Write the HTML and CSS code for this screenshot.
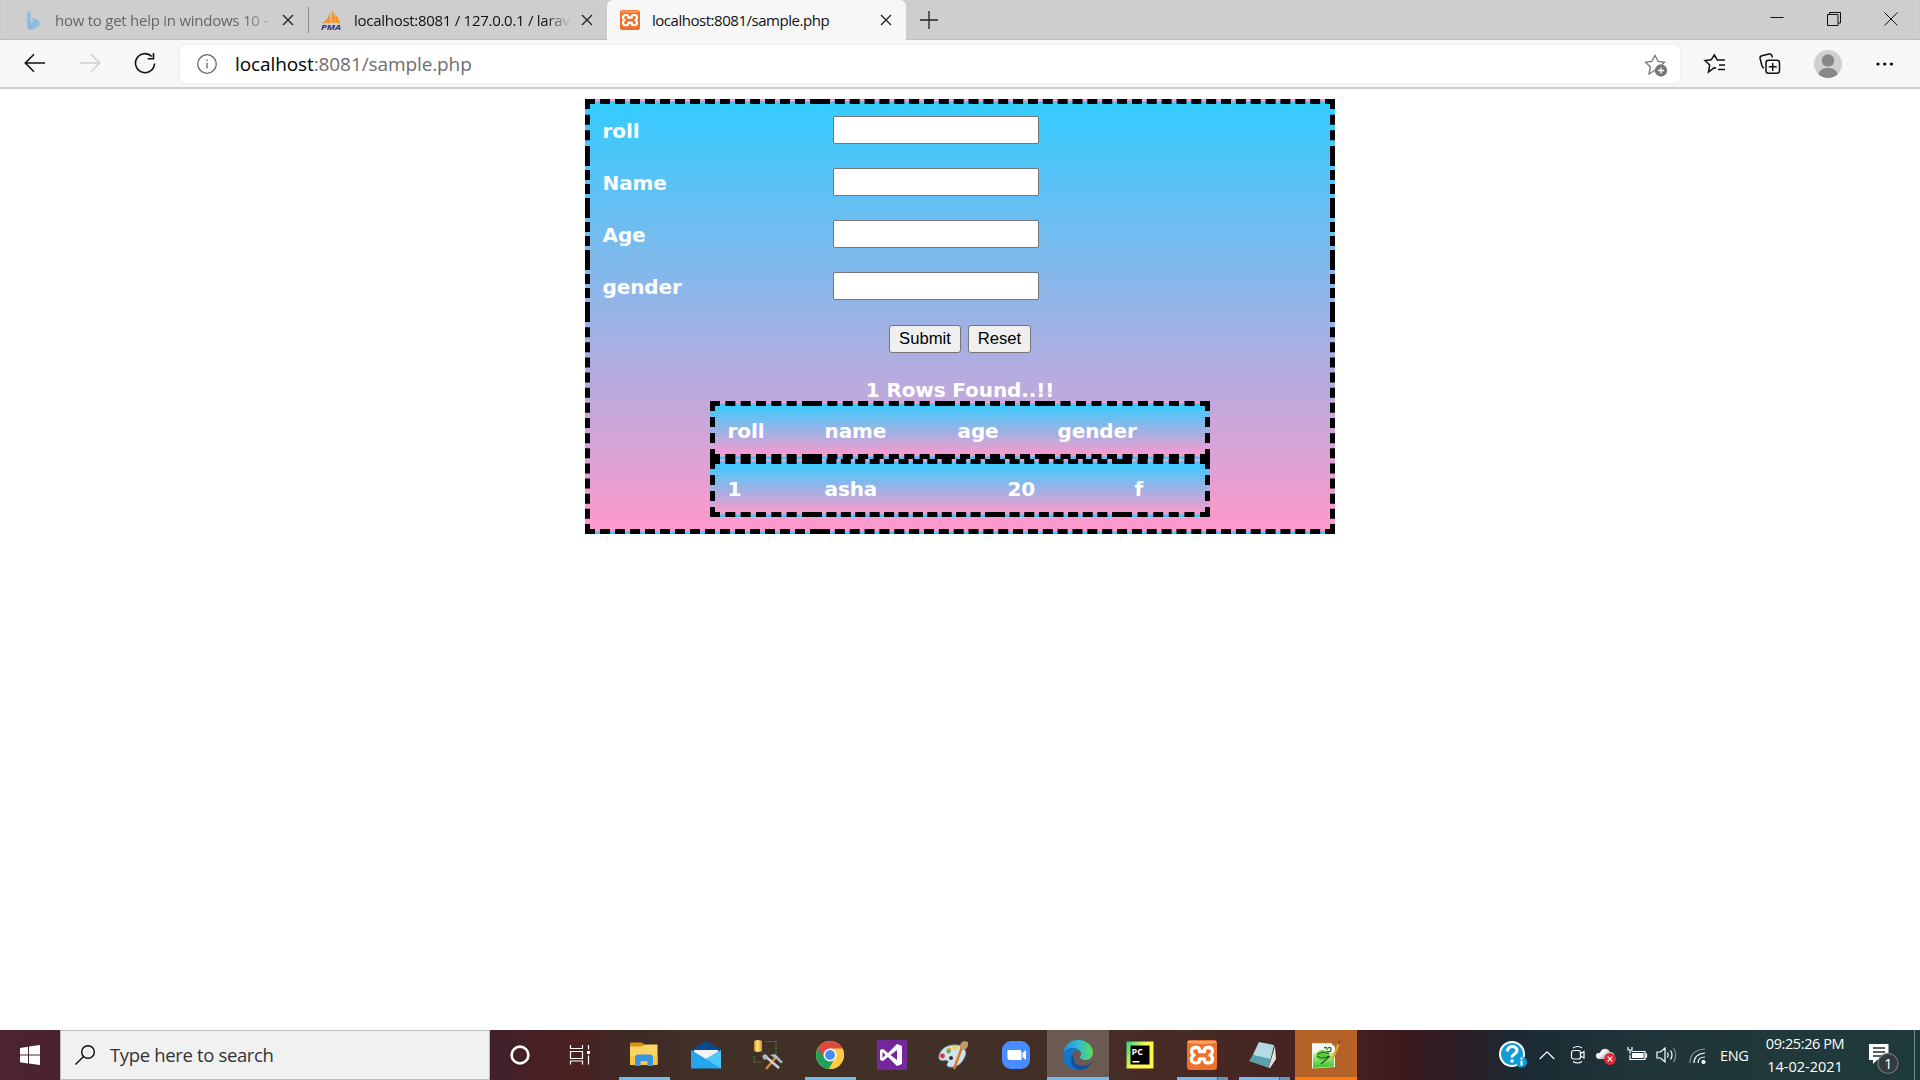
FILE: index.html
```html
<!DOCTYPE html>
<html lang="en">
<head>
<meta charset="utf-8">
<title>localhost:8081/sample.php</title>
<link rel="stylesheet" href="styles.css">
</head>
<body>
<div class="screen">
  <header class="tabs">
    <div class="tab tab-bing">
      <svg class="fav" viewBox="0 0 20 20"><defs><linearGradient id="bg" x1="0" y1="0" x2="1" y2="1"><stop offset="0" stop-color="#8ccbe8"/><stop offset=".5" stop-color="#8bb5e6"/><stop offset="1" stop-color="#84d3d8"/></linearGradient></defs><path d="M4 .7l3.6 1.4v11.2l3-1.8-1.5-3.6 5.2 1.8c2.200 1 3 2.800 2.300 4.800-.4 1.200-1.200 1.900-2.300 2.500l-5 2.600c-1.500.6-2.900.300-3.900-.600-.900-.700-1.400-1.700-1.400-3z" fill="url(#bg)"/></svg>
      <span class="tab-title faded">how to get help in windows 10 -</span>
      <svg class="x" viewBox="0 0 12 12"><path d="M1 1l10 10M11 1L1 11"/></svg>
    </div>
    <div class="tab tab-pma">
      <svg class="fav" viewBox="0 0 20 20"><path d="M9 2C8 7 5 11 1 13.500c3-.8 5-.8 8.500-.500zM10.500 0c3 3.500 4 8 4 13l-4-.500zM14 4c3 3 4.500 6 5 9.500l-4-.7z" fill="#f59421"/><text x="0" y="19.500" class="pma" textLength="20" lengthAdjust="spacingAndGlyphs">PMA</text></svg>
      <span class="tab-title cut">localhost:8081 / 127.0.0.1 / larave</span>
      <svg class="x" viewBox="0 0 12 12"><path d="M1 1l10 10M11 1L1 11"/></svg>
    </div>
    <div class="tab tab-active">
      <svg class="fav" viewBox="1 1 30 30"><use href="#xampp"/></svg>
      <span class="tab-title">localhost:8081/sample.php</span>
      <svg class="x" viewBox="0 0 12 12"><path d="M1 1l10 10M11 1L1 11"/></svg>
    </div>
    <svg class="plus" viewBox="0 0 18 18"><path d="M9 0v18M0 9h18"/></svg>
    <div class="win">
      <svg viewBox="0 0 14 14"><path d="M.5 5.500h13"/></svg>
      <svg viewBox="0 0 14 14"><path d="M.5 2.500h10.500v11H.5zM2.500 2.500V.5h11v10.500H11"/></svg>
      <svg viewBox="0 0 14 14"><path d="M.5.5l13 13M13.500.5l-13 13"/></svg>
    </div>
  </header>

  <nav class="toolbar">
    <svg class="nav-icon back" viewBox="0 0 22 20"><path d="M21 10H1.500M10 1.300L1.300 10l8.700 8.700"/></svg>
    <svg class="nav-icon forward" viewBox="0 0 22 20"><path d="M1 10h19.500M12 1.300l8.700 8.700-8.700 8.700"/></svg>
    <svg class="nav-icon reload" viewBox="0 0 22 22"><path d="M20.500 11.500A9.500 9.500 0 1 1 17.800 4.500M19.500 1v5.700h-5.800"/></svg>
    <div class="address">
      <svg class="info" viewBox="0 0 20 20"><circle cx="10" cy="10" r="9.300"/><path d="M10 8.700v5.800M10 5.500v1.400"/></svg>
      <span class="url"><b>localhost</b>:8081/sample.php</span>
      <svg class="add-fav" viewBox="0 0 24 24"><path d="M14 18l-3-1.700L5 20l1.400-7L1.500 8.300l6.300-.8L11 1.500l3.200 6 6.300.8-2.500 2.200"/><circle cx="17" cy="16.500" r="5.500" class="dot"/><path d="M17 13.500v6M14 16.500h6" class="w"/></svg>
    </div>
    <svg class="tool fav-list" viewBox="0 0 22 20"><path d="M12 14.500l-1.700-.9L4.500 18l1.200-7L1 6.500l6.200-.7L10.300 1l3 5H21M15 11h6M14 15.500h7"/></svg>
    <svg class="tool collections" viewBox="0 0 22 22"><path d="M5 15C3 14.500 3 13 2.600 11.500L1.100 5.500C.8 4 1.500 3.200 2.800 2.800L10 1c1.700-.3 2.500.3 2.900 1.700l.5 1.800"/><rect x="7" y="7.200" width="13.500" height="13" rx="2.500"/><path d="M13.700 10v8M9.700 13.700h8"/></svg>
    <svg class="avatar" viewBox="0 0 28 28"><circle cx="14" cy="14" r="14" fill="#d2d0ce"/><circle cx="14" cy="10.500" r="6.200" fill="#8a8886"/><path d="M4.500 24.200C5.500 20 9 18 14 18s8.500 2 9.500 6.200A14 14 0 0 1 14 28a14 14 0 0 1-9.500-3.800z" fill="#8a8886"/></svg>
    <svg class="more" viewBox="0 0 18 4"><circle cx="2" cy="2" r="1.600"/><circle cx="8.700" cy="2" r="1.600"/><circle cx="15.400" cy="2" r="1.600"/></svg>
  </nav>

  <main class="page">
    <table class="sheet form">
      <colgroup><col class="c-label"><col></colgroup>
      <tr><td class="name">roll</td><td><input type="text" aria-label="roll"></td></tr>
      <tr><td class="name">Name</td><td><input type="text" aria-label="Name"></td></tr>
      <tr><td class="name">Age</td><td><input type="text" aria-label="Age"></td></tr>
      <tr><td class="name">gender</td><td><input type="text" aria-label="gender"></td></tr>
      <tr><td colspan="2">
        <div class="buttons"><button class="submit">Submit</button><button class="reset">Reset</button></div>
        <div class="found">1 Rows Found..!!</div>
        <table class="sheet result">
          <colgroup><col class="w1"><col class="w2"><col class="w3"><col></colgroup>
          <tr><td>roll</td><td>name</td><td>age</td><td>gender</td></tr>
        </table>
        <table class="sheet result">
          <colgroup><col class="w1"><col class="w4"><col class="w5"><col></colgroup>
          <tr><td>1</td><td>asha</td><td>20</td><td>f</td></tr>
        </table>
      </td></tr>
    </table>
  </main>

  <footer class="taskbar">
    <div class="start"><svg viewBox="0 0 20 20"><path d="M0 3l8-1.200v7.700H0zM9 1.600L20 0v9.500H9zM0 10.500h8v7.900L0 17.300zM9 10.500h11V20L9 18.500z" fill="#fff"/></svg></div>
    <div class="search">
      <svg viewBox="0 0 20 20"><circle cx="13" cy="7" r="6.300"/><path d="M8.500 11.500L.5 19.500"/></svg>
      <span>Type here to search</span>
    </div>
    <div class="sys"><svg viewBox="0 0 32 32"><circle cx="16" cy="16" r="8.400" fill="none" stroke="#fff" stroke-width="2.600"/></svg></div>
    <div class="sys view"><svg viewBox="0 0 32 32"><path d="M6.500 6v3.500h12V6M6.500 25.500V22h12v3.500M6.500 12.500h12v7h-12zM24.500 6v4.500M24.500 16.500v9" fill="none" stroke="#fff" stroke-width="1.200"/><path d="M23 12h3v3h-3z" fill="#fff"/></svg></div>

    <div class="app run"><svg viewBox="0 0 32 32"><path d="M2 5q0-1.500 1.500-1.500H14l2 2-2 2.500H2z" fill="#d9930f"/><path d="M2 7.500h12l2-2h13.500V25H2z" fill="#ffd460"/><path d="M2 17h27.500v9H2z" fill="#fac540"/><path d="M7 27V18.500Q7 15.500 10 15.500h12q3 0 3 3V27h-5.500v-4q0-1-1-1h-5q-1 0-1 1v4z" fill="#3795e2"/></svg></div>
    <div class="app"><svg viewBox="0 0 32 32"><path d="M1 11L16 1.500 31 11v5H1z" fill="#0a4a8c"/><path d="M4 11h24v10H4z" fill="#f4f4f4"/><path d="M1 11l15 9 15-9v18.500H1z" fill="#25a5ee"/><path d="M31 11v18.500L16 20z" fill="#4cc9fa"/></svg></div>
    <div class="app"><svg viewBox="0 0 32 32"><defs><linearGradient id="cy"><stop offset="0" stop-color="#c48a13"/><stop offset=".4" stop-color="#ffe68c"/><stop offset="1" stop-color="#d99b16"/></linearGradient></defs><path d="M2 2q4-2 8 0v10q-4 2-8 0z" fill="url(#cy)"/><path d="M14 2.500h10v13M2 17v6h8" fill="none" stroke="#3f9640" stroke-width="1.200" stroke-dasharray="1.300 1"/><path d="M14 30l11-13" stroke="#c98b3c" stroke-width="2.500"/><path d="M13 17l14 12" stroke="#c8d3df" stroke-width="2.500"/><path d="M10 17l3-2 3 2-1 3-3 1zM18 16l5-1 8 8-2 1.500-4-4-3-2z" fill="#aebac6"/></svg></div>
    <div class="app run"><svg viewBox="0 0 32 32"><circle cx="16" cy="16" r="14" fill="#fecb42"/><path d="M3.900 9A14 14 0 0 0 15 30l6-11-5-3z" fill="#1fa05c"/><path d="M16 9.500h12.300A14 14 0 0 1 15 30l6.300-11z" fill="#fecb42"/><path d="M3.900 9A14 14 0 0 1 28.300 9.500H16l-6 9z" fill="#dc4a3e"/><circle cx="16" cy="16" r="6.500" fill="#fff"/><circle cx="16" cy="16" r="5" fill="#4a8af4"/></svg></div>
    <div class="app"><svg viewBox="0 0 32 32"><path d="M1 1h30v30H1z" fill="#74279a"/><path d="M4 11l3-1 5 4 9-9 5 2v18l-5 2-9-9-5 4-3-1zM6.500 13v6l3-3zM14.500 16l6.500 5V11z" fill="#fff" fill-rule="evenodd"/></svg></div>
    <div class="app shift"><svg viewBox="0 0 32 32"><path d="M2 18C3 10 10 6 18 6c8 0 12 5 10 11-2 5-6 11-14 11-4 0-5-2-3-4 1-2-1-3-3-3-4 1-6 0-6-3z" fill="#cde3f0" stroke="#8fb2ca"/><circle cx="12" cy="11" r="2.300" fill="#f39b25"/><circle cx="18" cy="9" r="2.300" fill="#f7d433"/><circle cx="5.500" cy="17" r="2.400" fill="#d8353b"/><circle cx="11.500" cy="12.500" r="2" fill="#5cae4b"/><circle cx="14" cy="19" r="2" fill="#403026"/><path d="M17 30l8-22" stroke="#db7b27" stroke-width="2.600"/><path d="M23 9q-1-5 4-7l4 1q1 6-4 8z" fill="#c29766"/></svg></div>
    <div class="app"><svg viewBox="0 0 32 32"><rect x="2" y="2" width="28" height="28" rx="9" fill="#4a8cff"/><path d="M7.500 11h12q2 0 2 2v8h-12q-2 0-2-2v-8zM22.500 14l3.500-3v10l-3.500-3z" fill="#fff"/></svg></div>
    <div class="app focus"><svg viewBox="0 0 32 32"><defs><linearGradient id="ed"><stop offset="0" stop-color="#1f8ad8"/><stop offset=".5" stop-color="#33b8d8"/><stop offset="1" stop-color="#5ddc52"/></linearGradient></defs><path d="M1 15C2 6 8 1 16 1c9 0 15 6 15 12.500 0 5-3.500 7.500-7.500 7.500-3.500 0-6-1.500-5.500-3.500 2-2 1.500-4.500-.5-6C12 7 4 9 1 15z" fill="url(#ed)"/><path d="M1 15c3-6 11-8 16-3.500-4-1-8 3-7 8 1 6 7 9 12 8.500-2 2-4 3-7 3C7 31 0 24 1 15z" fill="#1575cb"/><path d="M13 13c-4 5-1 14 7 14 4 0 7-1 9-4 .7 0 .7.600.4 1-3 5-7 7-11 7-8 0-13-9-5.400-18z" fill="#124f9e"/></svg></div>
    <div class="app"><svg viewBox="0 0 32 32"><defs><linearGradient id="pc" x2=".8" y2=".5"><stop offset="0" stop-color="#21d789"/><stop offset=".7" stop-color="#fcf84a"/></linearGradient></defs><path d="M2.500 2.500h27v27h-27z" fill="url(#pc)"/><path d="M6.500 6.500h19v19h-19z"/><text x="7.500" y="15.500" class="pc">PC</text><path d="M8.500 22h7v1.500h-7z" fill="#fff"/></svg></div>
    <div class="app run stack"><svg viewBox="0 0 32 32"><g id="xampp"><rect x="1" y="1" width="30" height="30" rx="3" fill="#ee722a"/><path d="M2 2h28v2Q16 6 2 4z" fill="#f4a36f"/><path d="M9.500 8.500h1q3 0 3 3v1h5v-1q0-3 3-3h1q4 0 4 4 0 2-2.500 3.700 2.500 1.500 2.500 3.700 0 4-4 4h-1q-3 0-3-3v-1h-5v1q0 3-3 3h-1q-4 0-4-4 0-2.200 2.500-3.700-2.500-1.700-2.500-3.700 0-4 4-4z" fill="none" stroke="#fff" stroke-width="3.300" stroke-linejoin="round"/></g></svg></div>
    <div class="app run stack"><svg viewBox="0 0 32 32"><path d="M11 3l15 3-5 21-19-5z" fill="#64a9b7"/><path d="M11 3l15 3-3.500 14L5 16z" fill="#b4dae2"/><path d="M5 16l17.500 4L21 28 1 22z" fill="#58a3b2"/><path d="M1 22l20 6 6-21 1 13-6 9z" fill="#e4e6df"/><path d="M12 2.500l15 3" stroke="#333" stroke-width="1.500" stroke-dasharray="1 1"/></svg></div>
    <div class="app alert"><svg viewBox="0 0 32 32"><defs><linearGradient id="np" x2="0" y2="1"><stop offset="0" stop-color="#d8f0a0"/><stop offset="1" stop-color="#33c42a"/></linearGradient></defs><path d="M2 4h19l4 4v20l-23 1.500z" fill="#f5f7f5"/><path d="M3 15q10-3 21-1v13.500L3 29z" fill="url(#np)"/><path d="M7 14q4-5 9-2 4 2 2 6-3 4-8 3-5-2-3-7z" fill="#5fcf3c"/><path d="M7 15q8-3 12 0M7 17q5 4 12 0M14 9q3-2 3 2M18 9q3-2 3 2-1 3-4 1M11 25l9-8" fill="none" stroke="#255a20" stroke-width="1.200"/><path d="M3 3.500h17" stroke="#888" stroke-width="2" stroke-dasharray="1 1"/><path d="M22.500 20L29.500 3" stroke="#e5a528" stroke-width="2.300"/><path d="M28.700 5l1-2.800" stroke="#a8323a" stroke-width="2.300"/></svg></div>

    <div class="tray">
      <svg class="t-help" viewBox="0 0 28 28"><circle cx="13" cy="13" r="12" fill="#109bd5" stroke="#fff" stroke-width="2"/><path d="M8.500 10.500C8 4 18 4 18 9.500c0 4-5 3-5 7" fill="none" stroke="#fff" stroke-width="3"/><circle cx="13" cy="20" r="1.800" fill="#fff"/><circle cx="22.500" cy="21" r="5.500" fill="#109bd5"/><path d="M22.500 19.500v5M22.500 16.500v2" stroke="#fff" stroke-width="2"/></svg>
      <svg class="t-up" viewBox="0 0 16 9"><path d="M.7 8L8 .8 15.300 8"/></svg>
      <svg class="t-cam" viewBox="0 0 16 20"><rect x="1.500" y="5.500" width="9" height="8.500" rx="2"/><path d="M10.500 8.500l3.500-2v6.500l-3.500-2M3 3q4.500-3 9 0M3 16.500q4.500 3 9 0"/></svg>
      <svg class="t-cloud" viewBox="0 0 22 20"><path d="M3 13c-4-2-2-7 2-6C7 1 14 2 15 6c5 0 6 5 3 7z" fill="#ccc" stroke="none"/><path d="M3 13L13 5q-5-5-8 2-4 0-4 3z" fill="#f5f5f5" stroke="none"/><circle cx="15" cy="13" r="6" fill="#d72b35" stroke="none"/><path d="M12.700 10.700l4.600 4.600M17.300 10.700l-4.600 4.600"/></svg>
      <svg class="t-bat" viewBox="0 0 20 16"><path d="M4.500 5.500H18v8H3V9M18 8h1.500v3H18M1 1v3h4V1M3 4v4"/><path d="M5.500 7.500H16v4H5.500z" fill="#fff"/></svg>
      <svg class="t-vol" viewBox="0 0 22 18"><path d="M1 6h3.500L9 2v14l-4.500-4H1zM11.500 6.500q1.500 2.500 0 5M14.500 4.500q3 4.500 0 9"/><path d="M17.500 2q4.500 7 0 14" opacity=".45"/></svg>
      <svg class="t-wifi" viewBox="0 0 18 18"><path d="M1 16Q1 3 16 2" opacity=".45"/><path d="M5 16Q5 7 16 6M9 16q0-6 7-6"/><circle cx="14.500" cy="15" r="1.500" fill="#fff"/></svg>
      <span class="t-lang">ENG</span>
      <div class="clock"><span class="time">09:25:26 PM</span><span class="date">14-02-2021</span></div>
      <svg class="t-note" viewBox="0 0 32 32"><path d="M1 1h19.500v16H9l-4 4v-4H1z" fill="#fff"/><path d="M5 5h12M5 9h12M5 13h12" stroke="#1d3235" stroke-width="1.300"/><circle cx="20" cy="20.500" r="10" fill="#333b3d" stroke="#777"/><text x="16" y="26" class="badge">1</text></svg>
    </div>
  </footer>
</div>
</body>
</html>
```
FILE: styles.css
```css
* { box-sizing: border-box; }
body { margin: 0; overflow: hidden; background: #fff; font-family: "Open Sans", "Noto Sans", sans-serif; }
svg { display: block; flex: none; overflow: visible; }
.screen { width: 1920px; height: 1080px; display: flex; flex-direction: column; }

/* tab strip */
.tabs { height: 40px; flex: none; display: flex; background: #cecece; box-shadow: inset 0 -1px 1px #bdbdbd; font-size: 15px; color: #111; }
.tab { height: 40px; display: flex; align-items: center; }
.tab-bing { width: 309px; padding-left: 23px; border-image: linear-gradient(transparent 20%, #8b8b8b 20%, #8b8b8b 80%, transparent 80%) 1; border-right: 1px solid; }
.tab-pma { width: 298px; padding-left: 12px; }
.tab-active { width: 299px; padding-left: 13px; background: #f7f7f7; border-radius: 6px 6px 0 0; }
.fav { width: 20px; height: 20px; }
.tab-title { white-space: nowrap; line-height: 24px; margin-top: -1px; letter-spacing: -.25px; }
.tab-bing .tab-title { margin-left: 12px; width: 213px; }
.tab-pma .tab-title { margin-left: 13px; width: 217px; letter-spacing: -.28px; }
.tab-active .tab-title { margin-left: 12px; width: 215px; letter-spacing: -.47px; }
.faded { color: #666; -webkit-mask-image: linear-gradient(90deg, #000 88%, rgba(0,0,0,.3)); }
.cut { -webkit-mask-image: linear-gradient(90deg, #000 88%, transparent); }
.x { width: 12px; height: 12px; fill: none; stroke: #222; stroke-width: 1.3; }
.tab-bing .x { margin-left: 14px; }
.tab-pma .x { margin-left: 10px; }
.tab-active .x { margin-left: 13px; }
.plus { width: 18px; height: 18px; margin: 11px 0 0 14px; fill: none; stroke: #222; stroke-width: 1.3; }
.pma { font: italic bold 7.5px "Open Sans", sans-serif; fill: #34346a; }
.win { margin: 12px 22px 0 auto; display: flex; gap: 43px; }
.win svg { width: 14px; height: 14px; fill: none; stroke: #111; stroke-width: 1; }

/* toolbar */
.toolbar { height: 49px; flex: none; display: flex; align-items: center; background: #f7f7f7; border-bottom: 2px solid #cecece; }
.nav-icon { fill: none; stroke: #111; stroke-width: 1.6; width: 22px; height: 20px; margin-bottom: 1px; }
.back { margin-left: 24px; }
.forward { margin-left: 33px; stroke: #d0d0d0; }
.reload { margin-left: 33px; height: 22px; }
.address { margin-left: 24px; width: 1500px; height: 38px; background: #fff; border-radius: 5px; display: flex; align-items: center; box-shadow: 0 0 3px #e4e4e4; }
.info { width: 20px; height: 20px; margin-left: 17px; fill: none; stroke: #666; stroke-width: 1.3; }
.url { margin-left: 18px; font-size: 19px; color: #6e6e6e; letter-spacing: -.1px; }
.url b { font-weight: 400; color: #000; }
.add-fav { width: 24px; height: 24px; margin: 4px 12px 0 auto; fill: none; stroke: #777; stroke-width: 1.3; }
.add-fav .dot { fill: #777; }
.add-fav .w { stroke: #fff; }
.tool { fill: none; stroke: #111; stroke-width: 1.5; }
.fav-list { width: 22px; height: 20px; margin-left: 24px; }
.collections { width: 22px; height: 22px; margin-left: 33px; }
.avatar { width: 28px; height: 28px; margin-left: 33px; }
.more { width: 18px; height: 4px; margin-left: 34px; }

/* page content */
.page { flex: 1; padding-top: 10px; }
.sheet { border-collapse: collapse; border: 5px dashed #000; table-layout: fixed; margin: 0 auto; background-image: linear-gradient(#3cf, #f9c); font: bold 20px/24px Verdana, "DejaVu Sans", sans-serif; color: #fff; letter-spacing: -.1px; }
.sheet td { padding: 12.5px; text-align: left; }
.sheet td.name { padding: 13.5px 12.5px 11.5px; }
.form { width: 750px; }
.form > tbody > tr { height: 52px; }
.c-label { width: 232.5px; }
.sheet input { display: block; width: 206px; height: 28px; margin: -.5px 0; border: 1px solid #767676; border-radius: 2px; background: #fff; }
.buttons { display: flex; justify-content: center; gap: 7px; }
.buttons button { height: 28px; padding: 0; border: 1px solid #767676; border-radius: 3px; background: #efefef; font: 16.67px "Liberation Sans", Arial, sans-serif; color: #000; }
.submit { width: 72px; }
.reset { width: 63px; }
.found { margin-top: 25px; height: 23px; text-align: center; }
.result { width: 500px; }
.result td { padding: 13px 12.5px 11px; }
.w1 { width: 99.5px; }
.w2 { width: 133px; }
.w3 { width: 100px; }
.w4 { width: 183px; }
.w5 { width: 127px; }

/* taskbar */
.taskbar { height: 50px; flex: none; display: flex; color: #fff; background: linear-gradient(90deg, #4b2430 0, #42202a 500px, #4b2020 575px, #3f2a26 620px, #423026 720px, #403026 950px, #472a24 1200px, #431f20 1360px, #3c1a1e 1400px, #2a1f28 1470px, #1b2a33 1520px, #203539 1640px, #20393b 1800px, #1f3a3c 1920px); }
.start { width: 60px; display: flex; align-items: center; justify-content: center; }
.start svg { width: 20px; height: 20px; }
.search { width: 430px; display: flex; align-items: center; padding-left: 14px; background: #f1f1f1; border: 1px solid #bdbdbd; color: #333; font-size: 18.500px; letter-spacing: -.35px; }
.search svg { width: 20px; height: 20px; fill: none; stroke: #111; stroke-width: 1.500; }
.search span { margin: -2px 0 0 15px; }
.sys { width: 60px; display: flex; align-items: center; justify-content: center; }
.sys.view { width: 63px; padding-right: 4px; }
.sys svg, .app svg { width: 32px; height: 32px; }
.app { width: 62px; display: flex; align-items: center; justify-content: center; background: linear-gradient(#76b9ed, #76b9ed) center bottom / 0 3px no-repeat; }
.app.shift { padding-right: 3px; }
.app.run { background-size: 51px 3px; }
.app.stack { background: linear-gradient(90deg, #76b9ed 40px, #3f5f7b 40px, #3f5f7b 41px, #6495bd 41px) center bottom / 51px 3px no-repeat; }
.app.focus { background-color: #6a5a52; background-size: 100% 3px; }
.app.alert { background: linear-gradient(#b46227 47px, #ff7a0a 47px); }
.pc { font: bold 9px "Open Sans", sans-serif; fill: #fff; }
.tray { flex: 1; margin-left: 142px; display: flex; align-items: center; margin-right: 5px; border-right: 1px solid #72898b; }
.tray svg { fill: none; stroke: #fff; stroke-width: 1.200; }
.tray .t-help, .tray .t-note { stroke: none; }
.t-help { width: 28px; height: 28px; }
.t-up { width: 16px; height: 9px; margin-left: 12px; }
.t-cam { width: 16px; height: 20px; margin-left: 15px; }
.t-cloud { width: 22px; height: 20px; margin: 2px 0 0 9px; }
.t-bat { width: 20px; height: 16px; margin: -3px 0 0 10px; }
.t-vol { width: 22px; height: 18px; margin-left: 9px; }
.t-wifi { width: 18px; height: 18px; margin: 2px 0 0 11px; }
.t-lang { margin-left: 13px; font-size: 14.500px; width: 29px; letter-spacing: -.3px; }
.clock { width: 80px; margin-left: 16px; display: flex; flex-direction: column; align-items: center; font-size: 14.500px; line-height: 23px; white-space: nowrap; }
.clock .time { letter-spacing: -.4px; }
.t-note { width: 32px; height: 32px; margin: 7px 0 0 23px; }
.badge { font: 15px "Open Sans", sans-serif; fill: #fff; }
```
